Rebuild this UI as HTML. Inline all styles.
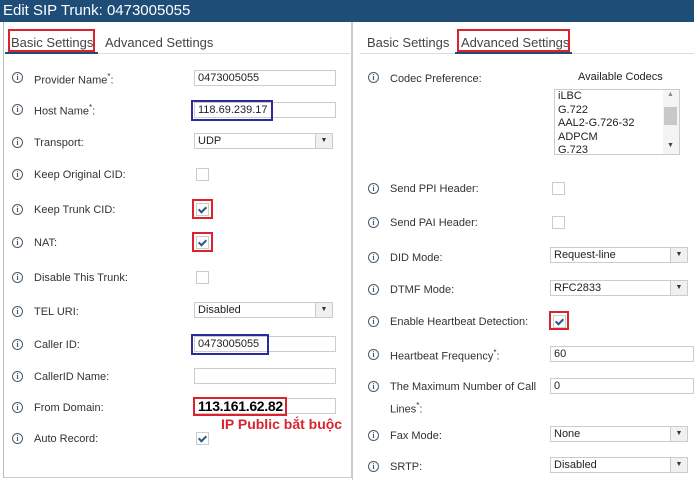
<!DOCTYPE html>
<html><head><meta charset="utf-8"><style>
body{margin:0;width:694px;height:480px;background:#fff;font-family:"Liberation Sans",Arial,sans-serif;font-size:11px;color:#333;position:relative;overflow:hidden}
.a{position:absolute}
.hdr{left:0;top:0;width:694px;height:22px;background:#1e4d78;color:#fff;font-size:15px;line-height:22px;padding-left:3px;box-sizing:border-box}
.ic{position:absolute;width:9px;height:9px;border:1px solid #4a5a6a;border-radius:50%;font-size:8px;line-height:9px;text-align:center;color:#4a5a6a;font-weight:bold;font-family:"Liberation Serif",serif}
.lb{position:absolute;font-size:11px;color:#333;white-space:nowrap}
.in{position:absolute;height:16px;border:1px solid #ccc;box-sizing:border-box;font-size:11px;line-height:14px;padding-left:3px;color:#222;background:#fff}
.sel::after{content:"▼";position:absolute;right:0;top:0;width:16px;height:14px;border-left:1px solid #ccc;background:#f0f0f0;font-size:7px;text-align:center;line-height:14px;color:#333}
.cb{position:absolute;width:11px;height:11px;border:1px solid #ccc;background:#fff}
.ck::after{content:"";position:absolute;left:3px;top:1px;width:3px;height:6px;border-right:2px solid #2a5a8a;border-bottom:2px solid #2a5a8a;transform:rotate(45deg)}
.red{position:absolute;border:2px solid #d9232d;box-sizing:border-box}
.blue{position:absolute;border:2px solid #2b2b9b;box-sizing:border-box}
sup{font-size:8px}
</style></head><body>
<div class="a hdr">Edit SIP Trunk: 0473005055</div>
<div class="a" style="left:3px;top:22px;width:347px;height:455px;border-left:1px solid #bbb;border-right:1px solid #ccc;border-bottom:1px solid #ccc"></div>
<div class="a" style="left:352px;top:22px;width:342px;height:458px;border-left:1px solid #ccc"></div>
<div class="a" style="left:5px;top:53px;width:345px;border-top:1px solid #ddd"></div>
<div class="a" style="left:5px;top:52px;width:93px;border-top:2px solid #1e4d78"></div>
<div class="lb" style="left:11px;top:35px;font-size:13px;color:#444">Basic Settings</div>
<div class="red" style="left:8px;top:29px;width:87px;height:23px"></div>
<div class="lb" style="left:105px;top:35px;font-size:13px;color:#444">Advanced Settings</div>
<div class="a" style="left:360px;top:53px;width:334px;border-top:1px solid #ddd"></div>
<div class="a" style="left:455px;top:52px;width:117px;border-top:2px solid #1e4d78"></div>
<div class="lb" style="left:367px;top:35px;font-size:13px;color:#444">Basic Settings</div>
<div class="lb" style="left:461px;top:35px;font-size:13px;color:#444">Advanced Settings</div>
<div class="red" style="left:457px;top:29px;width:113px;height:23px"></div>

<div class="ic" style="left:12px;top:72px">i</div><div class="lb" style="left:34px;top:72px">Provider Name<sup>*</sup>:</div>
<div class="in" style="left:194px;top:70px;width:142px">0473005055</div>
<div class="ic" style="left:12px;top:104px">i</div><div class="lb" style="left:34px;top:103px">Host Name<sup>*</sup>:</div>
<div class="in" style="left:194px;top:102px;width:142px">118.69.239.17</div>
<div class="blue" style="left:191px;top:100px;width:82px;height:21px"></div>
<div class="ic" style="left:12px;top:137px">i</div><div class="lb" style="left:34px;top:137px">Transport:</div>
<div class="in sel" style="left:194px;top:133px;width:139px">UDP</div>
<div class="ic" style="left:12px;top:169px">i</div><div class="lb" style="left:34px;top:169px">Keep Original CID:</div>
<div class="cb" style="left:196px;top:168px"></div>
<div class="ic" style="left:12px;top:204px">i</div><div class="lb" style="left:34px;top:204px">Keep Trunk CID:</div>
<div class="cb ck" style="left:196px;top:203px"></div><div class="red" style="left:192px;top:199px;width:21px;height:20px"></div>
<div class="ic" style="left:12px;top:237px">i</div><div class="lb" style="left:34px;top:237px">NAT:</div>
<div class="cb ck" style="left:196px;top:236px"></div><div class="red" style="left:192px;top:232px;width:21px;height:20px"></div>
<div class="ic" style="left:12px;top:272px">i</div><div class="lb" style="left:34px;top:272px">Disable This Trunk:</div>
<div class="cb" style="left:196px;top:271px"></div>
<div class="ic" style="left:12px;top:306px">i</div><div class="lb" style="left:34px;top:306px">TEL URI:</div>
<div class="in sel" style="left:194px;top:302px;width:139px">Disabled</div>
<div class="ic" style="left:12px;top:339px">i</div><div class="lb" style="left:34px;top:339px">Caller ID:</div>
<div class="in" style="left:194px;top:336px;width:142px">0473005055</div>
<div class="blue" style="left:191px;top:334px;width:78px;height:21px"></div>
<div class="ic" style="left:12px;top:371px">i</div><div class="lb" style="left:34px;top:371px">CallerID Name:</div>
<div class="in" style="left:194px;top:368px;width:142px"></div>
<div class="ic" style="left:12px;top:402px">i</div><div class="lb" style="left:34px;top:402px">From Domain:</div>
<div class="in" style="left:194px;top:398px;width:142px;font-size:14px;font-weight:bold;color:#000;line-height:15px;letter-spacing:-0.3px">113.161.62.82</div>
<div class="red" style="left:193px;top:397px;width:94px;height:19px"></div>
<div class="lb" style="left:221px;top:416px;color:#d9232d;font-weight:bold;font-size:14px">IP Public bắt buộc</div>
<div class="ic" style="left:12px;top:433px">i</div><div class="lb" style="left:34px;top:433px">Auto Record:</div>
<div class="cb ck" style="left:196px;top:432px"></div>

<div class="ic" style="left:368px;top:72px">i</div><div class="lb" style="left:390px;top:73px">Codec Preference:</div>
<div class="lb" style="left:578px;top:71px;color:#222">Available Codecs</div>
<div class="a" style="left:554px;top:89px;width:126px;height:66px;border:1px solid #ccc;overflow:hidden;font-size:11px;line-height:13.5px;color:#222;padding-left:3px;box-sizing:border-box">iLBC<br>G.722<br>AAL2-G.726-32<br>ADPCM<br>G.723</div>
<div class="a" style="left:663px;top:90px;width:16px;height:64px;background:#f4f4f4"></div>
<div class="a" style="left:664px;top:107px;width:13px;height:18px;background:#c8c8c8"></div>
<div class="lb" style="left:667px;top:91px;font-size:7px;color:#888">▲</div>
<div class="lb" style="left:667px;top:142px;font-size:7px;color:#444">▼</div>
<div class="ic" style="left:368px;top:183px">i</div><div class="lb" style="left:390px;top:183px">Send PPI Header:</div>
<div class="cb" style="left:552px;top:182px"></div>
<div class="ic" style="left:368px;top:217px">i</div><div class="lb" style="left:390px;top:217px">Send PAI Header:</div>
<div class="cb" style="left:552px;top:216px"></div>
<div class="ic" style="left:368px;top:252px">i</div><div class="lb" style="left:390px;top:252px">DID Mode:</div>
<div class="in sel" style="left:550px;top:247px;width:138px">Request-line</div>
<div class="ic" style="left:368px;top:284px">i</div><div class="lb" style="left:390px;top:284px">DTMF Mode:</div>
<div class="in sel" style="left:550px;top:280px;width:138px">RFC2833</div>
<div class="ic" style="left:368px;top:316px">i</div><div class="lb" style="left:390px;top:316px">Enable Heartbeat Detection:</div>
<div class="cb ck" style="left:553px;top:315px"></div><div class="red" style="left:549px;top:311px;width:20px;height:19px"></div>
<div class="ic" style="left:368px;top:349px">i</div><div class="lb" style="left:390px;top:348px">Heartbeat Frequency<sup>*</sup>:</div>
<div class="in" style="left:550px;top:346px;width:144px">60</div>
<div class="ic" style="left:368px;top:381px">i</div><div class="lb" style="left:390px;top:381px">The Maximum Number of Call</div>
<div class="lb" style="left:390px;top:401px">Lines<sup>*</sup>:</div>
<div class="in" style="left:550px;top:378px;width:144px">0</div>
<div class="ic" style="left:368px;top:430px">i</div><div class="lb" style="left:390px;top:430px">Fax Mode:</div>
<div class="in sel" style="left:550px;top:426px;width:138px">None</div>
<div class="ic" style="left:368px;top:461px">i</div><div class="lb" style="left:390px;top:461px">SRTP:</div>
<div class="in sel" style="left:550px;top:457px;width:138px">Disabled</div>
</body></html>
